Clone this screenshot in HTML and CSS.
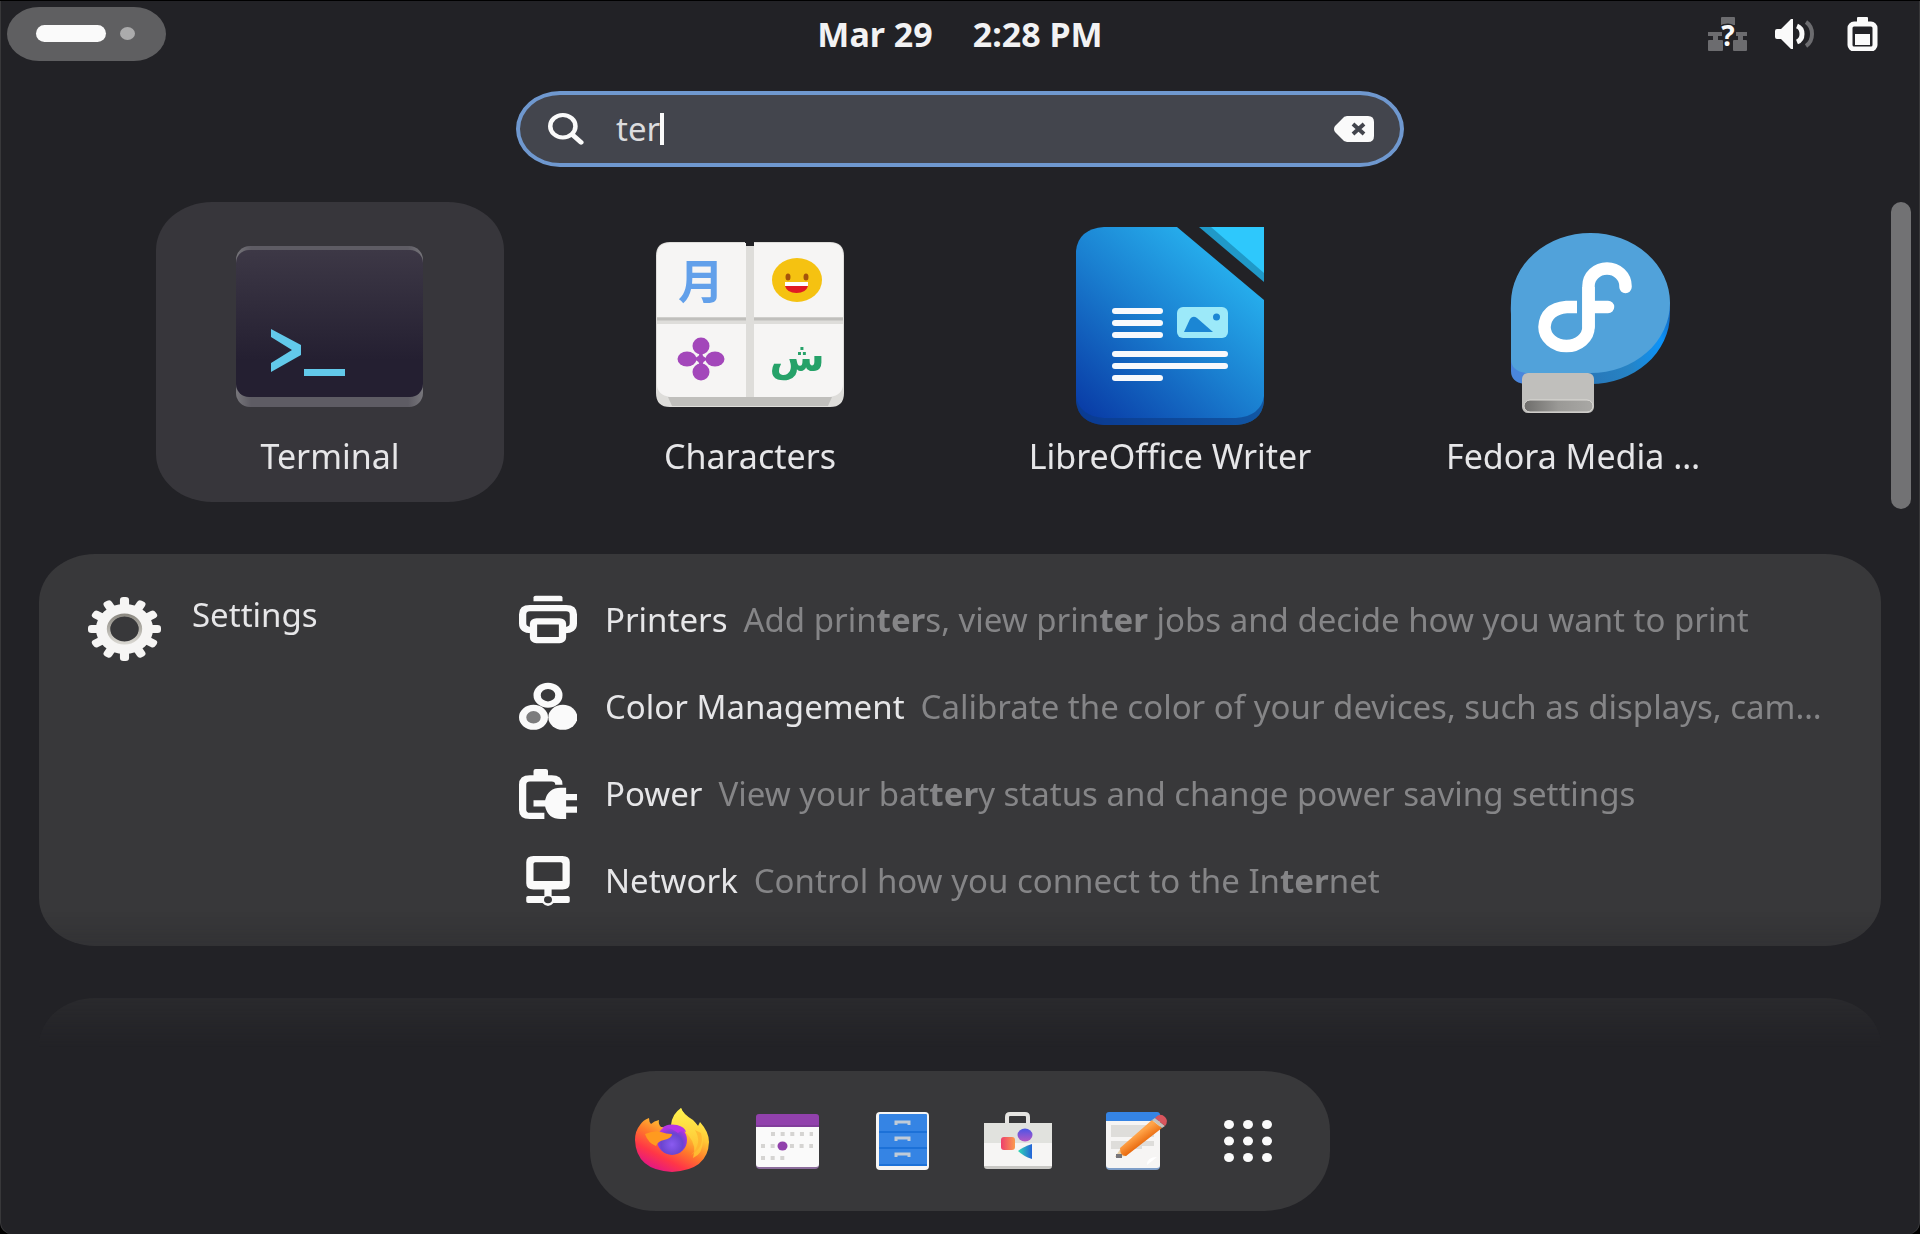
FILE: index.html
```html
<!DOCTYPE html>
<html lang="en">
<head>
<meta charset="utf-8">
<meta name="viewport" content="width=device-width, initial-scale=1">
<title>Activities</title>
<link rel="stylesheet" href="styles.css">
</head>
<body>
<div class="shell">
  <header class="topbar">
    <div class="topbar-start">
      <button class="activities" type="button" aria-label="Activities">
        <span class="workspace-current"></span>
        <span class="workspace-other"></span>
      </button>
    </div>
    <button class="clock" type="button"><span>Mar 29</span><span>2:28 PM</span></button>
    <button class="status" type="button" aria-label="System menu">
      <svg class="status-network" width="40" height="34" viewBox="0 0 40 34" aria-hidden="true">
        <path class="dim" d="M13 1q0-1 1-1h12q1 0 1 1v7H13zM0 15h14v4h-4v4h4q1 0 1 1v9q0 1-1 1H1q-1 0-1-1v-9q0-1 1-1h4v-4H0zM39 15H28v4h2v4h-4q-1 0-1 1v9q0 1 1 1h12q1 0 1-1v-9q0-1-1-1h-3v-4h4z"/>
        <text class="status-mark" x="20" y="29" text-anchor="middle">?</text>
      </svg>
      <svg class="status-volume" width="40" height="34" viewBox="0 0 40 34" aria-hidden="true">
        <path class="fg" d="M0 14q0-2 2-2h4L16 2h2v30h-2L6 22H2q-2 0-2-2z"/>
        <path class="line" stroke-width="5" d="M22 9q5 2 5 8t-5 8"/>
        <path class="line-dim" stroke-width="4" d="M31 5q6 4 6 12t-6 12"/>
      </svg>
      <svg width="31" height="34" viewBox="0 0 31 34" aria-hidden="true">
        <path class="fg" d="M10 6V1q0-1 1-1h9q1 0 1 1v5z"/>
        <rect class="line" stroke-width="5" x="3" y="7" width="25" height="25" rx="4"/>
        <rect class="fg" x="8" y="17" width="15" height="11"/>
      </svg>
    </button>
  </header>

  <form class="search" role="search">
    <svg width="36" height="32" viewBox="0 0 16 16" preserveAspectRatio="none" aria-hidden="true">
      <circle class="line" stroke-width="2" cx="6.6" cy="6.6" r="5.6"/>
      <path class="line" stroke-width="2.2" stroke-linecap="round" d="M10.8 10.8l3.9 3.9"/>
    </svg>
    <div class="search-field">
      <input class="search-input" type="text" value="ter" size="3" aria-label="Type to search">
      <span class="search-caret"></span>
    </div>
    <button class="search-clear" type="button" aria-label="Clear search">
      <svg width="40" height="26" viewBox="0 0 40 26" aria-hidden="true">
        <path class="fg" d="M13 0h21q6 0 6 6v14q0 6-6 6H13q-3 0-5-3l-7-7q-2-3 0-6l7-7q2-3 5-3z"/>
        <path class="cross" d="M19 8l11 10M30 8L19 18"/>
      </svg>
    </button>
  </form>

  <main class="results">
    <div class="results-list">
      <div class="apps">
        <button class="app app-selected" type="button">
          <svg width="188" height="200" viewBox="0 0 188 200" aria-hidden="true">
            <defs>
              <linearGradient id="term-screen" x1="0" y1="0" x2="0" y2="1"><stop offset="0" stop-color="#3d3846"/><stop offset=".75" stop-color="#241f31"/></linearGradient>
              <linearGradient id="term-edge" x1="0" y1="0" x2="1" y2="0"><stop offset="0" stop-color="#77767b"/><stop offset=".08" stop-color="#5e5c64"/><stop offset=".92" stop-color="#5e5c64"/><stop offset="1" stop-color="#77767b"/></linearGradient>
            </defs>
            <rect x="0" y="20" width="187" height="161" rx="14" fill="url(#term-edge)"/>
            <rect x="0" y="24" width="187" height="147" rx="13" fill="url(#term-screen)"/>
            <path d="M35 103l30 16v10l-30 17v-9l21-13-21-13z" fill="#62c9ea"/>
            <rect x="68" y="143" width="41" height="7" fill="#62c9ea"/>
          </svg>
          <span class="app-name">Terminal</span>
        </button>
        <button class="app" type="button">
          <svg width="188" height="200" viewBox="0 0 188 200" aria-hidden="true">
            <path d="M14 16H89v4h9v-4h76q14 0 14 14v137q0 14-14 14H14q-14 0-14-14V30q0-14 14-14z" fill="#deddda"/>
            <path d="M12 171h164l-4 9H16z" fill="#c0bfbc"/>
            <path d="M14 17H90v74H1V30q0-13 13-13zM98 17h76q13 0 13 13v61H98zM1 98h89v73H14q-13-2-13-13zM98 98h89v60q0 11-13 13H98z" fill="#f6f5f4"/>
            <path d="M1 93h89M98 93h89" stroke="#c0bfbc" stroke-width="3"/>
            <text class="glyph-moon" x="45" y="72" text-anchor="middle">月</text>
            <text class="glyph-sheen" x="141" y="145" text-anchor="middle">ش</text>
            <ellipse cx="141" cy="54" rx="25" ry="22" fill="#f5c211"/>
            <ellipse cx="132" cy="51" rx="2.5" ry="3.5" fill="#a5530a"/><ellipse cx="150" cy="51" rx="2.5" ry="3.5" fill="#a5530a"/>
            <path d="M129 56h23v4q-2 7-11.500 7T129 60z" fill="#e01b24"/><path d="M129 56h23v4h-23z" fill="#fff"/>
            <g fill="#a347ba"><circle cx="45" cy="120" r="8.500"/><circle cx="45" cy="146" r="8.500"/><ellipse cx="31" cy="133" rx="9.500" ry="7.500"/><ellipse cx="59" cy="133" rx="9.500" ry="7.500"/><path d="M43 126q2 5-6 6v2q8 0 6 8h4q-2-8 6-8v-2q-8 0-6-6z"/></g>
          </svg>
          <span class="app-name">Characters</span>
        </button>
        <button class="app" type="button">
          <svg width="188" height="200" viewBox="0 0 188 200" aria-hidden="true">
            <defs>
              <linearGradient id="writer-page" x1="0.05" y1="1" x2=".8" y2=".1"><stop offset="0" stop-color="#0838a4"/><stop offset=".55" stop-color="#1a7fd0"/><stop offset="1" stop-color="#28b4f0"/></linearGradient>
            </defs>
            <path d="M28 1h73l87 73v101q-2 22-28 24H28Q2 197 0 175V25Q2 3 28 1z" fill="url(#writer-page)"/>
            <path d="M0 170q3 20 28 22h132q25-2 28-22v5q-2 22-28 24H28Q2 197 0 175z" fill="#0b3c86" opacity=".6"/>
            <path d="M123 1h65v55z" fill="#2099c8"/><path d="M135 1h53v46z" fill="#2ec8fc"/>
            <g fill="#f8f9fc"><rect x="36" y="82" width="51" height="6" rx="3"/><rect x="36" y="94" width="51" height="6" rx="3"/><rect x="36" y="106" width="51" height="6" rx="3"/><rect x="36" y="125" width="116" height="6" rx="3"/><rect x="36" y="137" width="116" height="6" rx="3"/><rect x="36" y="149" width="51" height="6" rx="3"/></g>
            <rect x="101" y="81" width="51" height="31" rx="6" fill="#9ce9f9"/>
            <path d="M108 106l6-13q3-4 7-1l16 14z" fill="#1b86d4"/><circle cx="140.500" cy="91" r="3.500" fill="#1b86d4"/>
          </svg>
          <span class="app-name">LibreOffice Writer</span>
        </button>
        <button class="app" type="button">
          <svg width="188" height="200" viewBox="0 0 188 200" aria-hidden="true">
            <defs>
              <linearGradient id="usb-side" x1="0" y1=".6" x2="1" y2=".3"><stop offset="0" stop-color="#4a86dc"/><stop offset=".12" stop-color="#2a6cae"/><stop offset=".6" stop-color="#2683c4"/><stop offset=".84" stop-color="#0b93fa"/><stop offset="1" stop-color="#1a4f9c"/></linearGradient>
              <linearGradient id="usb-slot" x1="0" y1="0" x2="1" y2="0"><stop offset="0" stop-color="#6e6d6b"/><stop offset=".5" stop-color="#9a9996"/><stop offset="1" stop-color="#a9a8a5"/></linearGradient>
            </defs>
            <path d="M15 88a79.500 70 0 0 1 159-11v11a79.500 70 0 0 1-79.500 70H28q-13-2-13-13z" fill="url(#usb-side)"/>
            <path d="M15 77a79.500 70 0 0 1 159 0a79.500 70 0 0 1-79.500 70H30q-15-2-15-14z" fill="#51a2da"/>
            <g fill="none" stroke="#fff" stroke-width="12.500"><path stroke-linecap="round" d="M129.500 61v-1a18.500 17.500 0 0 0-37 0v41M93 81h19"/><path d="M92.500 61v40a22 19 0 0 1-44 0q1-18 22-20h11"/></g>
            <path d="M83 73v16" stroke="#51a2da" stroke-width="4"/>
            <rect x="26" y="147" width="72" height="40" rx="6" fill="#c0bfbc"/>
            <rect x="28" y="174" width="69" height="12" rx="6" fill="url(#usb-slot)" stroke="#dcdad6" stroke-width="1"/>
          </svg>
          <span class="app-name app-name-cut">Fedora Media …</span>
        </button>
      </div>

      <section class="panel">
        <button class="provider" type="button">
          <svg width="73" height="64" viewBox="0 0 64 64" preserveAspectRatio="none" aria-hidden="true">
            <defs>
              <g id="cog-pair"><rect x="28" y="0" width="8" height="12" rx="3"/><rect x="28" y="52" width="8" height="12" rx="3"/></g>
              <linearGradient id="cog-hole" x1="0" y1="0" x2="0" y2="1"><stop offset="0" stop-color="#8d8a82"/><stop offset="1" stop-color="#d8d6d0"/></linearGradient>
            </defs>
            <g fill="#f6f5f4"><use href="#cog-pair"/><use href="#cog-pair" transform="rotate(30 32 32)"/><use href="#cog-pair" transform="rotate(60 32 32)"/><use href="#cog-pair" transform="rotate(90 32 32)"/><use href="#cog-pair" transform="rotate(120 32 32)"/><use href="#cog-pair" transform="rotate(150 32 32)"/></g>
            <circle cx="32" cy="32" r="19" fill="none" stroke="#f6f5f4" stroke-width="12"/>
            <circle cx="32" cy="32" r="14" fill="none" stroke="url(#cog-hole)" stroke-width="3"/>
          </svg>
          <span>Settings</span>
        </button>
        <ul class="matches">
          <li><a class="match" href="#printers">
            <svg width="58" height="50" viewBox="0 0 16 16" preserveAspectRatio="none" aria-hidden="true">
              <path class="fg" d="M4 2V.8Q4 .2 4.600 .2h6.800q.6 0 .6.600V2z"/>
              <path class="line" stroke-width="2" d="M3.500 11.200Q1 11.200 1 9V6.200Q1 4.200 3 4.200h10q2 0 2 2V9q0 2.200-2.500 2.200"/>
              <rect class="line" stroke-width="2" x="4" y="8.400" width="8" height="6" rx=".8"/>
            </svg>
            <span class="match-name">Printers</span>
            <span class="match-text">Add prin<b>ter</b>s, view prin<b>ter</b> jobs and decide how you want to print</span>
          </a></li>
          <li><a class="match" href="#color">
            <svg width="58" height="50" viewBox="0 0 16 16" preserveAspectRatio="none" aria-hidden="true">
              <circle class="line" stroke-width="2" cx="8" cy="4.200" r="3"/>
              <circle class="line ring-filled" stroke-width="2" cx="4" cy="11.300" r="3"/>
              <circle class="fg" cx="12.100" cy="11.300" r="4"/>
            </svg>
            <span class="match-name">Color Management</span>
            <span class="match-text">Calibrate the color of your devices, such as displays, cam…</span>
          </a></li>
          <li><a class="match" href="#power">
            <svg width="58" height="50" viewBox="0 0 16 16" preserveAspectRatio="none" aria-hidden="true">
              <path class="fg" d="M4 3V.6Q4 0 4.600 0h2.800Q8 0 8 .6V3z"/>
              <path class="line" stroke-width="2" d="M11 5q0-2-2-2H3Q1 3 1 5v8q0 2 2 2h4"/>
              <path class="fg" d="M4 10h3.200q.8-4 4.300-4H13v2h3v2h-3v2h3v2h-3v2h-1.500q-3.500 0-4.300-4H4z"/>
            </svg>
            <span class="match-name">Power</span>
            <span class="match-text">View your bat<b>ter</b>y status and change power saving settings</span>
          </a></li>
          <li><a class="match" href="#network">
            <svg width="58" height="50" viewBox="0 0 16 16" preserveAspectRatio="none" aria-hidden="true">
              <path class="fg" fill-rule="evenodd" d="M4 0h8q2 0 2 2v6.700q0 2-2 2H9v2.100h4.500q.5 0 .5.500v1.200q0 .5-.5.500H9.500q-1.500 2-3 0h-4Q2 15 2 14.500v-1.200q0-.5.500-.5H7v-2.100H4q-2 0-2-2V2q0-2 2-2zm.5 2Q4 2 4 2.500V8h8V2.500q0-.5-.5-.5z"/>
              <circle class="hole" cx="8" cy="14" r="1.100"/>
            </svg>
            <span class="match-name">Network</span>
            <span class="match-text">Control how you connect to the In<b>ter</b>net</span>
          </a></li>
        </ul>
      </section>
      <section class="panel panel-next"></section>
    </div>
    <div class="scroll-thumb"></div>
  </main>

  <nav class="dash" aria-label="Dash">
    <button class="dash-item" type="button" aria-label="Firefox">
      <svg width="75" height="64" viewBox="0 0 75 64" aria-hidden="true">
        <defs>
          <linearGradient id="fx-body" x1=".85" y1=".1" x2=".3" y2="1"><stop offset="0" stop-color="#fff44f"/><stop offset=".3" stop-color="#ffc534"/><stop offset=".55" stop-color="#ff7a2a"/><stop offset=".78" stop-color="#ff3647"/><stop offset="1" stop-color="#e31587"/></linearGradient>
          <radialGradient id="fx-globe" cx=".5" cy=".65" r=".6"><stop offset="0" stop-color="#8a5bf0"/><stop offset=".6" stop-color="#6a45d0"/><stop offset="1" stop-color="#b833e1"/></radialGradient>
          <linearGradient id="fx-flame" x1="0" y1="0" x2="0" y2="1"><stop offset="0" stop-color="#fff44f"/><stop offset="1" stop-color="#ffb62e"/></linearGradient>
        </defs>
        <path d="M14 9q0 4 2 6 3-3 8-4-1 4 2 7h10l10-19q2 6 12 12 3 3 5 6l2-4q9 10 9 20-1 28-37 30Q1 61 0 31q0-9 5-15 3-5 9-7z" fill="url(#fx-body)"/>
        <path d="M36 16q1-11 10-17 2 7 12 13 10 9 10 19 0 14-10 18 4-12-4-22-5-8-18-11z" fill="url(#fx-flame)"/>
        <path d="M60 21q8 13-4 25 14-8 10-22z" fill="#ffb02e" opacity=".7"/>
        <ellipse cx="37" cy="31" rx="15" ry="15" fill="url(#fx-globe)"/>
        <path d="M27 19q5-5 15-3 8 2 9 7-6-2-8 1-8-6-16-5z" fill="#b534e6"/>
        <path d="M10 25q10-4 16-2 5 2 11 2 0 4-8 6-6 1-8 6-8-3-11-12z" fill="#ff9a1f"/>
      </svg>
    </button>
    <button class="dash-item" type="button" aria-label="Calendar">
      <svg width="75" height="64" viewBox="0 0 75 64" aria-hidden="true">
        <rect x="6" y="8" width="63" height="52" rx="4" fill="#8b6d9c"/>
        <rect x="6" y="9" width="63" height="49" rx="3" fill="#fafafa"/>
        <path d="M9 5h57q3 0 3 3v10H6V8q0-3 3-3z" fill="#9141ac"/><path d="M6 17h63" stroke="#713a88" stroke-width="1"/>
        <g fill="none" stroke="#d5d4d2" stroke-width="4"><path stroke-dasharray="4 5.650" d="M21 25h42"/><path stroke-dasharray="4 5.650" d="M11 37h52"/><path stroke-dasharray="4 5.650" d="M11 49h24"/></g>
        <ellipse cx="32.500" cy="37" rx="5" ry="4.500" fill="#9141ac"/>
      </svg>
    </button>
    <button class="dash-item" type="button" aria-label="Files">
      <svg width="75" height="64" viewBox="0 0 75 64" aria-hidden="true">
        <rect x="11" y="3" width="53" height="58" rx="4" fill="#f6f5f4"/>
        <rect x="14" y="5" width="48" height="52" rx="1" fill="#3584e4"/>
        <path d="M14 23h48M14 39h48M14 56h48" stroke="#1c71d8" stroke-width="2"/>
        <path d="M31 16v-3h13v3M31 32v-3h13v3M31 48v-3h13v3" fill="none" stroke="#c0cbd8" stroke-width="3"/>
      </svg>
    </button>
    <button class="dash-item" type="button" aria-label="Software">
      <svg width="75" height="64" viewBox="0 0 75 64" aria-hidden="true">
        <defs>
          <linearGradient id="sw-square"><stop offset="0" stop-color="#ee3f6d"/><stop offset="1" stop-color="#fb9a4e"/></linearGradient>
          <linearGradient id="sw-dot" x1="0" y1="0" x2="0" y2="1"><stop offset="0" stop-color="#4b55e6"/><stop offset="1" stop-color="#b557c4"/></linearGradient>
          <linearGradient id="sw-play"><stop offset="0" stop-color="#2fdcb4"/><stop offset="1" stop-color="#2563d8"/></linearGradient>
        </defs>
        <path d="M27 14V8q0-3 3-3h15q3 0 3 3v6" fill="none" stroke="#e6e5e2" stroke-width="4"/>
        <path d="M4 14h68v43q0 3-3 3H7q-3 0-3-3z" fill="#c9c8c5"/>
        <path d="M4 14h68v43H4z" fill="#f6f5f4"/><path d="M4 14h68v20H4z" fill="#e1e2de"/>
        <rect x="21" y="28" width="14" height="13" rx="3" fill="url(#sw-square)"/>
        <ellipse cx="45" cy="26" rx="7.500" ry="6.500" fill="url(#sw-dot)"/>
        <path d="M38 42q5-4 14-7v15q-9-3-14-8z" fill="url(#sw-play)"/>
      </svg>
    </button>
    <button class="dash-item" type="button" aria-label="Text Editor">
      <svg width="75" height="64" viewBox="0 0 75 64" aria-hidden="true">
        <defs><linearGradient id="pencil" x1=".4" y1=".4" x2=".6" y2=".65"><stop offset="0" stop-color="#ffa348"/><stop offset="1" stop-color="#e8660a"/></linearGradient></defs>
        <rect x="11" y="5" width="54" height="56" rx="4" fill="#7f9fc8"/>
        <rect x="11" y="5" width="54" height="54" rx="3" fill="#f6f5f4"/>
        <path d="M14 3h48q3 0 3 3v6H11V6q0-3 3-3z" fill="#3584e4"/>
        <path d="M16 16h43v12H16zM16 32h43v5H47v3H16z" fill="#deddda"/><path d="M52 56q0-8 10-8z" fill="#fff"/>
        <path d="M20 48l6-9 6 8z" fill="#e8cfa5"/><path d="M21 45h6v4h-6z" fill="#77767b"/>
        <path d="M25 39l32-28 10 8-36 28q-6 0-6-8z" fill="url(#pencil)"/>
        <path d="M57 11l3-2 10 8-3 2z" fill="#c6c2bc"/><path d="M60 9q5-6 10-1 4 4 0 9z" fill="#d9555d"/>
      </svg>
    </button>
    <button class="dash-item" type="button" aria-label="Show Apps">
      <svg width="75" height="64" viewBox="0 0 75 64" aria-hidden="true">
        <g class="fg"><ellipse cx="19" cy="15.500" rx="5" ry="4.500"/><ellipse cx="38" cy="15.500" rx="5" ry="4.500"/><ellipse cx="57" cy="15.500" rx="5" ry="4.500"/><ellipse cx="19" cy="32" rx="5" ry="4.500"/><ellipse cx="38" cy="32" rx="5" ry="4.500"/><ellipse cx="57" cy="32" rx="5" ry="4.500"/><ellipse cx="19" cy="48.500" rx="5" ry="4.500"/><ellipse cx="38" cy="48.500" rx="5" ry="4.500"/><ellipse cx="57" cy="48.500" rx="5" ry="4.500"/></g>
      </svg>
    </button>
  </nav>
</div>
</body>
</html>
```
FILE: styles.css
```css
:root {
  --bg: #222226;
  --card: #38383a;
  --fg: #fafafa;
  --text: #e6e6e8;
  --muted: #858587;
}

* { box-sizing: border-box; }

body {
  margin: 0;
  background: #000;
  color: var(--text);
  font-family: "Noto Sans", "Open Sans", sans-serif;
  font-size: 33px;
  line-height: 44px;
}

button {
  border: 0;
  padding: 0;
  background: none;
  color: inherit;
  font: inherit;
}

svg { display: block; flex: none; }
.fg { fill: var(--fg); }
.dim { fill: #6c6c6f; }
.line { fill: none; stroke: var(--fg); }
.line-dim { fill: none; stroke: #6c6c6f; }
.ring-filled { fill: #7c7c7d; }
.hole { fill: var(--card); }

.shell {
  display: flex;
  flex-direction: column;
  height: 100vh;
  padding-bottom: 23px;
  background: var(--bg);
  border-radius: 0 0 12px 12px;
  box-shadow: inset 0 1px #000, inset 1px 0 #38383a, inset -1px 0 #38383a;
}

/* Top bar */
.topbar {
  display: grid;
  grid-template-columns: 1fr auto 1fr;
  align-items: center;
  height: 67px;
  padding: 0 42px 0 7px;
}
.activities {
  display: flex;
  align-items: center;
  gap: 14px;
  width: 159px;
  height: 54px;
  padding-left: 29px;
  border-radius: 32px / 27px;
  background: #5f5f61;
}
.workspace-current {
  width: 70px;
  height: 17px;
  border-radius: 9px;
  background: var(--fg);
}
.workspace-other {
  width: 15px;
  height: 13px;
  border-radius: 50%;
  background: #ababac;
}
.topbar-start { margin-right: -35px; }
.clock {
  display: flex;
  gap: 40px;
  margin-left: 35px;
  font-size: 34px;
  font-weight: 700;
  color: #f2f2f3;
}
.status {
  display: flex;
  align-items: center;
  justify-self: end;
}
.status-network {
  margin-right: 27px;
  overflow: visible;
}
.status-volume { margin-right: 32px; }
.status-mark {
  fill: var(--fg);
  font-size: 28px;
  font-weight: 700;
  stroke: var(--bg);
  stroke-width: 3px;
  paint-order: stroke;
}

/* Search entry */
.search {
  display: flex;
  align-items: center;
  gap: 32px;
  align-self: center;
  width: 888px;
  max-width: 100%;
  height: 76px;
  margin: 24px 0 35px;
  padding: 0 26px 0 28px;
  border: 4px solid #6f98cf;
  border-radius: 44px / 38px;
  background: #43454d;
}
.search-field {
  display: flex;
  flex: 1;
  align-items: center;
}
.search-input {
  field-sizing: content;
  border: 0;
  padding: 0;
  outline: 0;
  background: none;
  color: #dcdcde;
  font: inherit;
}
.search-caret {
  width: 4px;
  height: 32px;
  background: var(--fg);
}
.cross {
  fill: none;
  stroke: #43454d;
  stroke-width: 4px;
}

/* Results */
.results {
  display: flex;
  flex: 1;
  gap: 10px;
  min-height: 0;
  padding: 0 9px 0 39px;
}
.results-list {
  display: flex;
  flex: 1;
  flex-direction: column;
  gap: 52px;
  min-width: 0;
  overflow: hidden;
  -webkit-mask-image: linear-gradient(to top, transparent, #000 136px);
  mask-image: linear-gradient(to top, transparent, #000 136px);
}
.scroll-thumb {
  width: 20px;
  height: 307px;
  border-radius: 10px;
  background: #727274;
}

.apps {
  display: grid;
  flex: none;
  grid-template-columns: repeat(4, 348px);
  justify-content: center;
  gap: 72px;
}
.app {
  display: flex;
  flex-direction: column;
  align-items: center;
  gap: 8px;
  height: 300px;
  padding: 24px 30px 0;
  border-radius: 56px / 48px;
}
.app-selected { background: #37363b; }
.app-name {
  font-size: 34px;
  white-space: nowrap;
}
.app-name-cut { align-self: flex-start; }

.panel {
  display: grid;
  flex: none;
  grid-template-columns: 431px minmax(0, 1fr);
  padding: 41px 49px 40px;
  border-radius: 56px / 48px;
  background: var(--card);
}
.panel-next { min-height: 200px; }
.provider {
  display: flex;
  align-items: flex-start;
  align-self: start;
  gap: 31px;
  line-height: 40px;
}
.provider svg { margin-top: 2px; }
.matches {
  display: flex;
  flex-direction: column;
  gap: 37px;
  margin: 0;
  padding: 0;
  list-style: none;
}
.match {
  display: flex;
  align-items: center;
  height: 50px;
  color: inherit;
  text-decoration: none;
  white-space: nowrap;
}
.match svg { margin-right: 28px; }
.match-name { margin-right: 16px; }
.match-text { color: var(--muted); }
.match-text b { font-weight: 700; }

.glyph-moon {
  fill: #62a0ea;
  font-family: "Noto Sans CJK JP", sans-serif;
  font-size: 46px;
  font-weight: 700;
}
.glyph-sheen {
  fill: #26a269;
  font-family: "DejaVu Sans", sans-serif;
  font-size: 40px;
  font-weight: 700;
}

/* Dash */
.dash {
  display: flex;
  align-self: center;
  gap: 40px;
  margin-top: 24px;
  padding: 38px 45px;
  border-radius: 66px / 60px;
  background: var(--card);
}
.dash-item svg { overflow: visible; }
```
